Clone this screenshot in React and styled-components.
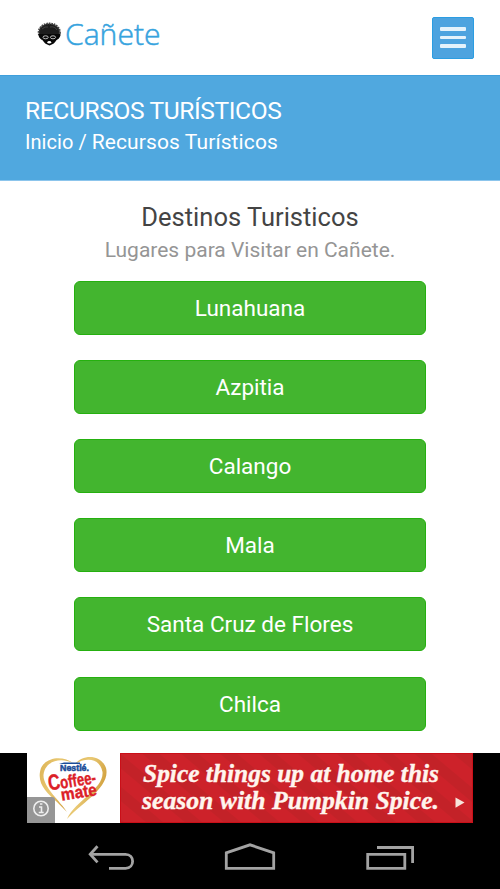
import React from "react";
import styled, { createGlobalStyle } from "styled-components";

const GlobalStyle = createGlobalStyle`
  * {
    box-sizing: border-box;
  }
  body {
    margin: 0;
    background: #fff;
    font-family: Roboto, "Liberation Sans", sans-serif;
  }
  svg {
    display: block;
  }
`;

const Screen = styled.div`
  width: 500px;
  height: 889px;
  display: flex;
  flex-direction: column;
  overflow: hidden;
`;

const Header = styled.header`
  height: 75px;
  flex: none;
  display: flex;
  justify-content: space-between;
  align-items: center;
  padding: 0 26px 0 36px;
`;

const MenuButton = styled.button`
  width: 42px;
  height: 42px;
  padding: 0;
  border: 1px solid #2b9de2;
  border-radius: 2px;
  background: #4da3df;
  display: flex;
  flex-direction: column;
  justify-content: center;
  align-items: center;
  gap: 5px;
`;

const MenuLine = styled.span`
  width: 26px;
  height: 3.5px;
  border-radius: 1px;
  background: #e4f2fb;
`;

const Banner = styled.section`
  height: 106px;
  flex: none;
  padding: 20px 25px 0;
  background: #50a8df;
  border-top: 1px solid #3f9fdc;
  border-bottom: 1px solid #8cc5ec;
  color: #fff;
`;

const BannerTitle = styled.h1`
  margin: 0;
  font-size: 24.6px;
  line-height: 30px;
  font-weight: 400;
  letter-spacing: -0.4px;
  white-space: nowrap;
`;

const Breadcrumb = styled.div`
  font-size: 21px;
  line-height: 32px;
  letter-spacing: 0.1px;
  white-space: nowrap;
`;

const Crumb = styled.a`
  font-size: 20px;
  letter-spacing: 0.05px;
`;

const Main = styled.main`
  height: 572px;
  flex: none;
  display: flex;
  flex-direction: column;
  align-items: center;
  padding-top: 20px;
`;

const Title = styled.h2`
  margin: 0;
  font-size: 25.5px;
  line-height: 32px;
  font-weight: 400;
  color: #444;
`;

const Subtitle = styled.p`
  margin: 0 0 12.6px;
  font-size: 21px;
  line-height: 35px;
  color: #959595;
`;

const List = styled.div`
  display: flex;
  flex-direction: column;
  gap: 25.2px;
`;

const Destination = styled.a`
  width: 352px;
  height: 54px;
  display: flex;
  justify-content: center;
  align-items: center;
  border: 1px solid #25b00f;
  border-radius: 6px;
  background: #43b52f;
  color: #fff;
  font-size: 22.5px;
`;

const AdStrip = styled.div`
  height: 70px;
  flex: none;
  padding-left: 27px;
  background: #000;
`;

const NavBar = styled.nav`
  flex: 1;
  display: flex;
  justify-content: space-between;
  align-items: flex-start;
  padding: 19px 85px 0 87px;
  background: #000;
`;

const destinations = [
  "Lunahuana",
  "Azpitia",
  "Calango",
  "Mala",
  "Santa Cruz de Flores",
  "Chilca",
];

function Logo() {
  return (
    <svg width="128" height="59" viewBox="36 8 128 59">
      <ellipse
        cx="49.3"
        cy="32.3"
        rx="10.6"
        ry="8.8"
        fill="#1c1c1c"
        stroke="#444"
        strokeWidth="2"
        strokeDasharray="1.6 0.9"
      />
      <path d="M38.5 34q0 4 4 6 2 4 7 5.5 5-1.5 7-5.5 4-2 4-6z" fill="#080808" />
      <path
        d="M42 29q3-3 6-2M50 27q5-1 7 3"
        stroke="#4a4a4a"
        strokeWidth="0.8"
        fill="none"
      />
      <g fill="none" stroke="#ccc" strokeWidth="0.9">
        <ellipse cx="45.6" cy="37.3" rx="2.6" ry="1.5" />
        <ellipse cx="53" cy="37.3" rx="2.6" ry="1.5" />
      </g>
      <ellipse cx="49.3" cy="42.3" rx="1.9" ry="1.3" fill="#fff" />
      <text
        x="65"
        y="44.7"
        textLength="95.5"
        lengthAdjust="spacingAndGlyphs"
        fontFamily="'Open Sans', sans-serif"
        fontWeight="300"
        fontSize="30"
        fill="#36a3de"
        stroke="#36a3de"
        strokeWidth="0.5"
      >
        Cañete
      </text>
    </svg>
  );
}

function CoffeeAd() {
  return (
    <svg width="446" height="70" viewBox="27 753 446 70">
      <defs>
        <linearGradient id="gold" x1="0" y1="0" x2="1" y2="0.5">
          <stop offset="0" stopColor="#dcb252" />
          <stop offset="0.5" stopColor="#e9c974" />
          <stop offset="1" stopColor="#cf9c38" />
        </linearGradient>
        <pattern
          id="stripes"
          width="25"
          height="25"
          patternUnits="userSpaceOnUse"
          patternTransform="rotate(40)"
        >
          <rect width="25" height="25" fill="#cd222a" />
          <rect width="25" height="11" fill="#c32228" />
        </pattern>
      </defs>
      <rect x="27" y="753" width="93" height="70" fill="#fff" />
      <g fill="url(#gold)">
        <path d="M73 763C64 756 47 756 41 768C36 783 46 792 57 802L67 812C60 801 43 787 43.5 775C45 761 60 757 73 763Z" />
        <path d="M75 764C83 754 101 754 106 768C111 787 80 804 67 819C76 800 104 789 102.5 772C100 758 86 757 75 764Z" />
      </g>
      <path d="M59 764h21v-1.5h-16z" fill="#1c4d98" />
      <text
        x="60"
        y="771"
        textLength="29"
        lengthAdjust="spacingAndGlyphs"
        fontFamily="'Liberation Sans', sans-serif"
        fontWeight="700"
        fontSize="8.5"
        fill="#1c4d98"
        stroke="#1c4d98"
        strokeWidth="0.5"
      >
        Nestlé.
      </text>
      <g
        fontFamily="'Liberation Sans', sans-serif"
        fontWeight="700"
        fill="#dc2027"
        stroke="#dc2027"
        strokeWidth="0.4"
        transform="rotate(-9 72 788)"
      >
        <text
          x="49"
          y="787"
          textLength="48"
          lengthAdjust="spacingAndGlyphs"
          fontSize="17.5"
        >
          <tspan fontSize="22">C</tspan>offee-
        </text>
        <text
          x="60"
          y="799"
          textLength="36"
          lengthAdjust="spacingAndGlyphs"
          fontSize="17"
        >
          mate
        </text>
      </g>
      <path d="M27 797h25q3 0 3 3v23H27z" fill="#969696" />
      <circle cx="41" cy="808.5" r="7.2" fill="none" stroke="#eee" strokeWidth="1.6" />
      <path
        d="M40 804h2.4M39 807h2.5v5M38.7 812.5h5"
        fill="none"
        stroke="#eee"
        strokeWidth="1.6"
      />
      <rect x="120" y="753" width="353" height="70" fill="url(#stripes)" />
      <path d="M120.5 753.5h352v69h-352z" fill="none" stroke="#ca0f18" />
      <g
        fontFamily="'Liberation Serif', serif"
        fontStyle="italic"
        fontWeight="700"
        fill="#fff5ee"
        stroke="#fff5ee"
        strokeWidth="0.4"
        fontSize="26"
      >
        <text x="143" y="782" textLength="296" lengthAdjust="spacingAndGlyphs">
          Spice things up at home this
        </text>
        <text x="142" y="808.5" textLength="297" lengthAdjust="spacingAndGlyphs">
          season with Pumpkin Spice.
        </text>
      </g>
      <path d="M455.5 797.5l9 5-9 5.2z" fill="#f7e4dc" />
    </svg>
  );
}

function BackIcon() {
  return (
    <svg width="48" height="30" viewBox="87 842 48 30">
      <g fill="none" stroke="#a3a3a3" strokeWidth="2.8">
        <path d="M90 854.3h35.5c9.5 0 9.5 14 0 14H109" />
        <path d="M97.5 846.2l-7.3 8.1 7.3 8.1" />
      </g>
    </svg>
  );
}

function HomeIcon() {
  return (
    <svg width="52" height="30" viewBox="224 842 52 30">
      <path
        d="M226.3 868.4v-15.6l23.7-8 23.7 8v15.6z"
        fill="none"
        stroke="#a3a3a3"
        strokeWidth="2.8"
      />
    </svg>
  );
}

function RecentIcon() {
  return (
    <svg width="50" height="30" viewBox="365 842 50 30">
      <g fill="none" stroke="#a3a3a3" strokeWidth="2.8">
        <path d="M367.7 854.4h37.1v14h-37.1z" />
        <path d="M377 847.5h35.6V863" />
      </g>
    </svg>
  );
}

export default function App() {
  return (
    <Screen>
      <GlobalStyle />
      <Header>
        <Logo />
        <MenuButton>
          <MenuLine />
          <MenuLine />
          <MenuLine />
        </MenuButton>
      </Header>
      <Banner>
        <BannerTitle>RECURSOS TURÍSTICOS</BannerTitle>
        <Breadcrumb>
          <Crumb>Inicio / </Crumb>
          Recursos Turísticos
        </Breadcrumb>
      </Banner>
      <Main>
        <Title>Destinos Turisticos</Title>
        <Subtitle>Lugares para Visitar en Cañete.</Subtitle>
        <List>
          {destinations.map((name) => (
            <Destination key={name}>{name}</Destination>
          ))}
        </List>
      </Main>
      <AdStrip>
        <CoffeeAd />
      </AdStrip>
      <NavBar>
        <BackIcon />
        <HomeIcon />
        <RecentIcon />
      </NavBar>
    </Screen>
  );
}
